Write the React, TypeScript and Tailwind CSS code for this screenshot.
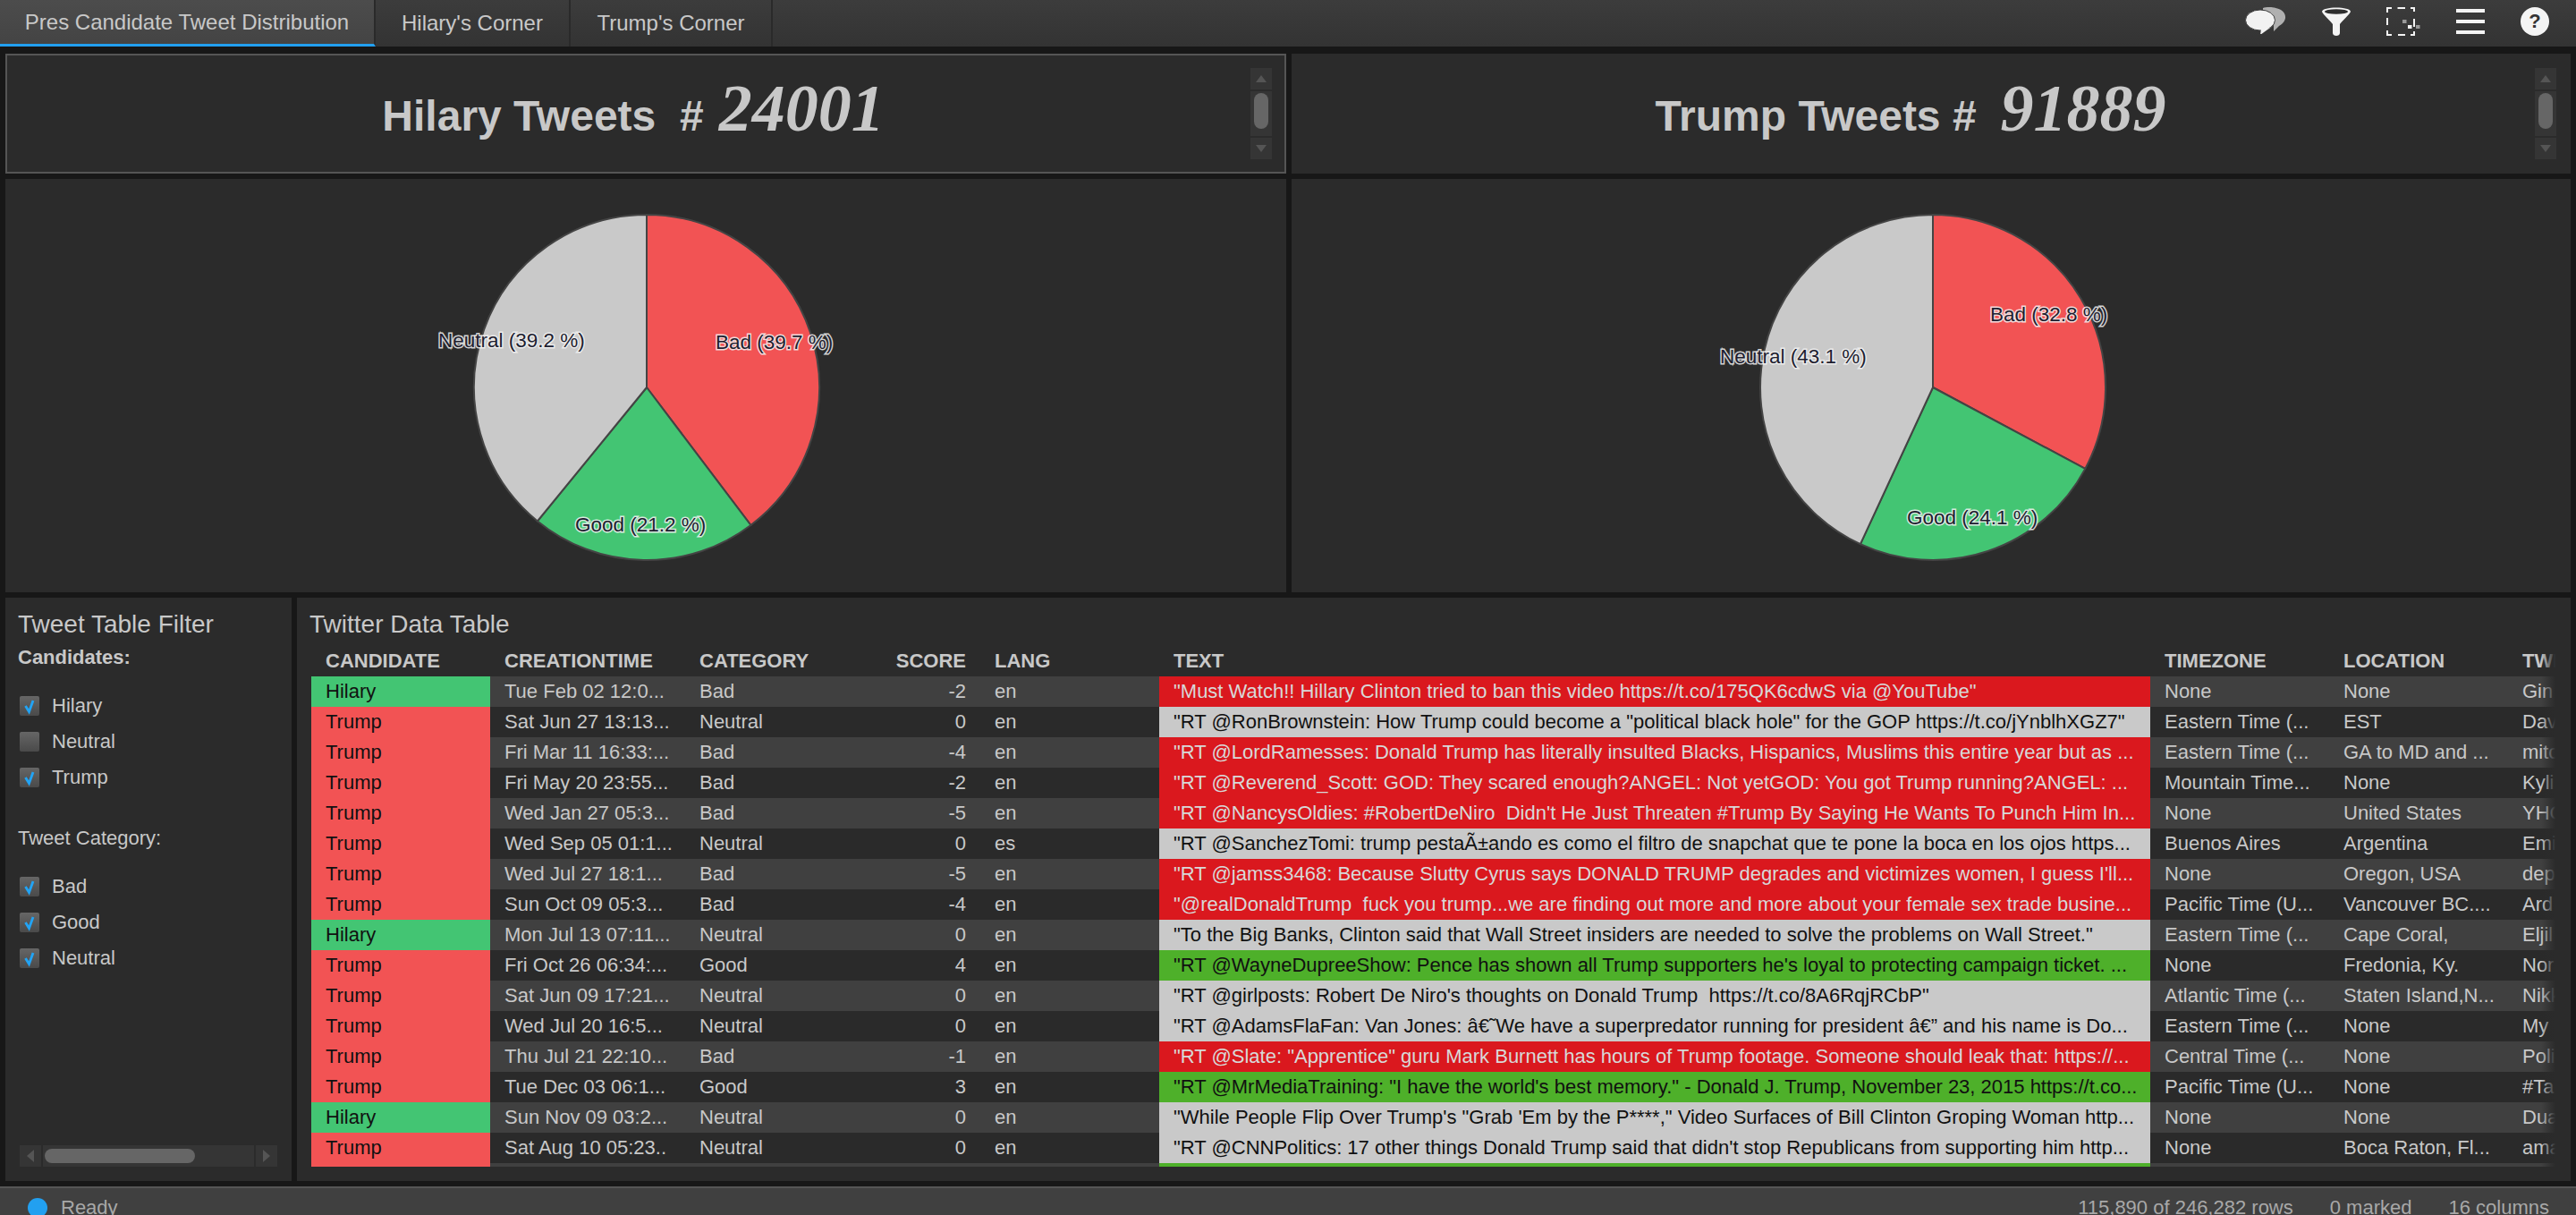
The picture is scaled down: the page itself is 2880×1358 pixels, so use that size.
import React from "react";

const SANS = "font-['Liberation_Sans',Arial,sans-serif]";

type Row = { c: string; t: string; cat: string; s: number; l: string; text: string; tz: string; loc: string; tw: string };
const rows: Row[] = [
  { c: "Hilary", t: "Tue Feb 02 12:0...", cat: "Bad", s: -2, l: "en", text: "\"Must Watch!! Hillary Clinton tried to ban this video https://t.co/175QK6cdwS via @YouTube\"", tz: "None", loc: "None", tw: "Gin" },
  { c: "Trump", t: "Sat Jun 27 13:13...", cat: "Neutral", s: 0, l: "en", text: "\"RT @RonBrownstein: How Trump could become a \"political black hole\" for the GOP https://t.co/jYnblhXGZ7\"", tz: "Eastern Time (...", loc: "EST", tw: "Dav" },
  { c: "Trump", t: "Fri Mar 11 16:33:...", cat: "Bad", s: -4, l: "en", text: "\"RT @LordRamesses: Donald Trump has literally insulted Blacks, Hispanics, Muslims this entire year but as ...", tz: "Eastern Time (...", loc: "GA to MD and ...", tw: "mitc" },
  { c: "Trump", t: "Fri May 20 23:55...", cat: "Bad", s: -2, l: "en", text: "\"RT @Reverend_Scott: GOD: They scared enough?ANGEL: Not yetGOD: You got Trump running?ANGEL: ...", tz: "Mountain Time...", loc: "None", tw: "Kyli" },
  { c: "Trump", t: "Wed Jan 27 05:3...", cat: "Bad", s: -5, l: "en", text: "\"RT @NancysOldies: #RobertDeNiro  Didn't He Just Threaten #Trump By Saying He Wants To Punch Him In...", tz: "None", loc: "United States", tw: "YHC" },
  { c: "Trump", t: "Wed Sep 05 01:1...", cat: "Neutral", s: 0, l: "es", text: "\"RT @SanchezTomi: trump pestaÃ±ando es como el filtro de snapchat que te pone la boca en los ojos https...", tz: "Buenos Aires", loc: "Argentina", tw: "Emi" },
  { c: "Trump", t: "Wed Jul 27 18:1...", cat: "Bad", s: -5, l: "en", text: "\"RT @jamss3468: Because Slutty Cyrus says DONALD TRUMP degrades and victimizes women, I guess I'll...", tz: "None", loc: "Oregon, USA", tw: "dep" },
  { c: "Trump", t: "Sun Oct 09 05:3...", cat: "Bad", s: -4, l: "en", text: "\"@realDonaldTrump  fuck you trump...we are finding out more and more about your female sex trade busine...", tz: "Pacific Time (U...", loc: "Vancouver BC....", tw: "Ard" },
  { c: "Hilary", t: "Mon Jul 13 07:11...", cat: "Neutral", s: 0, l: "en", text: "\"To the Big Banks, Clinton said that Wall Street insiders are needed to solve the problems on Wall Street.\"", tz: "Eastern Time (...", loc: "Cape Coral,", tw: "Eljil" },
  { c: "Trump", t: "Fri Oct 26 06:34:...", cat: "Good", s: 4, l: "en", text: "\"RT @WayneDupreeShow: Pence has shown all Trump supporters he's loyal to protecting campaign ticket. ...", tz: "None", loc: "Fredonia, Ky.", tw: "Nor" },
  { c: "Trump", t: "Sat Jun 09 17:21...", cat: "Neutral", s: 0, l: "en", text: "\"RT @girlposts: Robert De Niro's thoughts on Donald Trump  https://t.co/8A6RqjRCbP\"", tz: "Atlantic Time (...", loc: "Staten Island,N...", tw: "Nikk" },
  { c: "Trump", t: "Wed Jul 20 16:5...", cat: "Neutral", s: 0, l: "en", text: "\"RT @AdamsFlaFan: Van Jones: â€˜We have a superpredator running for president â€” and his name is Do...", tz: "Eastern Time (...", loc: "None", tw: "My" },
  { c: "Trump", t: "Thu Jul 21 22:10...", cat: "Bad", s: -1, l: "en", text: "\"RT @Slate: \"Apprentice\" guru Mark Burnett has hours of Trump footage. Someone should leak that: https://...", tz: "Central Time (...", loc: "None", tw: "Poli" },
  { c: "Trump", t: "Tue Dec 03 06:1...", cat: "Good", s: 3, l: "en", text: "\"RT @MrMediaTraining: \"I have the world's best memory.\" - Donald J. Trump, November 23, 2015 https://t.co...", tz: "Pacific Time (U...", loc: "None", tw: "#Ta" },
  { c: "Hilary", t: "Sun Nov 09 03:2...", cat: "Neutral", s: 0, l: "en", text: "\"While People Flip Over Trump's \"Grab 'Em by the P****,\" Video Surfaces of Bill Clinton Groping Woman http...", tz: "None", loc: "None", tw: "Dua" },
  { c: "Trump", t: "Sat Aug 10 05:23..", cat: "Neutral", s: 0, l: "en", text: "\"RT @CNNPolitics: 17 other things Donald Trump said that didn't stop Republicans from supporting him http...", tz: "None", loc: "Boca Raton, Fl...", tw: "ama" },
];

function wedge(cx: number, cy: number, r: number, from: number, to: number) {
  const p = (a: number) => {
    const rad = (a * Math.PI) / 180;
    return `${(cx + r * Math.sin(rad)).toFixed(2)} ${(cy - r * Math.cos(rad)).toFixed(2)}`;
  };
  const large = to - from > 180 ? 1 : 0;
  return `M${cx} ${cy} L${p(from)} A${r} ${r} 0 ${large} 1 ${p(to)} Z`;
}

function Pie({ w, bad, good, labels }: { w: number; bad: number; good: number; labels: { x: number; y: number; t: string }[] }) {
  const a = bad * 3.6;
  const b = (bad + good) * 3.6;
  const cx = 717;
  const cy = 233;
  const r = 193;
  return (
    <svg viewBox={`0 0 ${w} 462`} className="block w-full h-full">
      <path d={wedge(cx, cy, r, 0, a)} fill="#f25354" stroke="#444" strokeWidth="2" />
      <path d={wedge(cx, cy, r, a, b)} fill="#43c573" stroke="#444" strokeWidth="2" />
      <path d={wedge(cx, cy, r, b, 360)} fill="#c9c9c9" stroke="#444" strokeWidth="2" />
      {labels.map((l) => (
        <text
          key={l.t}
          x={l.x}
          y={l.y}
          fontSize="22.5"
          fontFamily="'Liberation Sans',Arial,sans-serif"
          fill="#1e1e30"
          stroke="#f2f2f2"
          strokeWidth="3"
          strokeOpacity="0.85"
          paintOrder="stroke"
        >
          {l.t}
        </text>
      ))}
    </svg>
  );
}

function VScroll({ pos }: { pos: string }) {
  return (
    <div className={`absolute ${pos} w-[24px] h-[102px] flex flex-col gap-[2px]`}>
      <div className="h-[24px] bg-[#353535] flex items-center justify-center">
        <div className="w-0 h-0 border-x-[6px] border-x-transparent border-b-[8px] border-b-[#555]" />
      </div>
      <div className="flex-1 bg-[#353535] flex justify-center pt-[2px]">
        <div className="w-[16px] h-[40px] rounded-full bg-[#666]" />
      </div>
      <div className="h-[24px] bg-[#353535] flex items-center justify-center">
        <div className="w-0 h-0 border-x-[6px] border-x-transparent border-t-[8px] border-t-[#555]" />
      </div>
    </div>
  );
}

function Check({ on, label }: { on: boolean; label: string }) {
  return (
    <div className="flex items-center h-[40px] pl-[2px]">
      <div className="w-[22px] h-[22px] rounded-[2px] bg-gradient-to-b from-[#666] to-[#4a4a4a] flex items-center justify-center">
        {on && (
          <svg viewBox="0 0 22 22" className="w-[22px] h-[22px]">
            <path d="M6.5 11 L10.5 17.5 L15 5" fill="none" stroke="#22a4f5" strokeWidth="2.8" />
          </svg>
        )}
      </div>
      <span className="ml-[14px] pb-[2px] text-[22px] text-[#c8c8c8]">{label}</span>
    </div>
  );
}

function ChatIcon() {
  return (
    <svg viewBox="0 0 46 30" className="block w-[46px] h-[30px]">
      <path d="M20 1 C24 -0.5 34 -0.5 40 3 C48 8 46 17 38 21 L32 27 L32 20 L20 14 Z" fill="#b0b0b0" />
      <ellipse cx="17" cy="14.5" rx="16.5" ry="11.5" fill="#f2f2f2" stroke="#3a3a3a" strokeWidth="1" />
      <path d="M18 24 L28 23 L17 31 Z" fill="#f2f2f2" />
    </svg>
  );
}
function FunnelIcon() {
  return (
    <svg viewBox="0 0 32 32" className="block w-[32px] h-[32px]">
      <path d="M0 5 C0 -1 32 -1 32 5 C32 7 21 17 20 19 L20 29 C20 33 12 33 12 29 L12 19 C11 17 0 7 0 5 Z" fill="#f4f4f4" />
      <ellipse cx="16" cy="5" rx="13" ry="2.8" fill="#2e2e2e" />
    </svg>
  );
}
function SelectIcon() {
  return (
    <svg viewBox="0 0 38 32" className="block w-[38px] h-[32px]">
      <g fill="none" stroke="#f4f4f4" strokeWidth="2">
        <path d="M1 6 V1 H6 M12.5 1 H21 M27 1 H31 V5 M31 13 V22 M31 27 V31 H27 M21 31 H13 M6 31 H1 V26 M1 20 V12" />
      </g>
      <rect x="18" y="14" width="4.5" height="4" fill="#999" />
      <rect x="24" y="20" width="4.5" height="4" fill="#f4f4f4" />
      <rect x="33" y="20" width="4.5" height="4" fill="#999" />
    </svg>
  );
}
function MenuIcon() {
  return (
    <div className="w-[32px] h-[28px] mt-[2px] flex flex-col justify-between">
      <div className="h-[4px] bg-[#f4f4f4]" />
      <div className="h-[4px] bg-[#f4f4f4]" />
      <div className="h-[4px] bg-[#f4f4f4]" />
    </div>
  );
}
function HelpIcon() {
  return (
    <div className="w-[32px] h-[32px] rounded-full bg-[#f4f4f4] flex items-center justify-center text-[22px] leading-none font-bold text-[#333]">?</div>
  );
}

const cols = "grid grid-cols-[200px_218px_210px_120px_200px_1108px_200px_200px_53px] h-[34px]";
const hcell = "text-[22px] font-bold text-[#c8c8c8] leading-[34px] whitespace-pre overflow-hidden px-[16px]";
const cell = "text-[22px] leading-[34px] whitespace-pre overflow-hidden px-[16px]";

export default function App() {
  return (
    <div className={`${SANS} w-[2880px] h-[1358px] overflow-hidden bg-[#171717] flex flex-col text-[#c8c8c8]`}>
      <header className="h-[52px] shrink-0 flex items-stretch bg-gradient-to-b from-[#3c3c3c] to-[#333]">
        <div className="w-[420px] flex items-center justify-center text-[24px] bg-gradient-to-b from-[#4c4c4c] to-[#444] border-b-[3px] border-[#22a0f0] border-r-2 border-r-[#2a2a2a]">
          Pres Candidate Tweet Distribution
        </div>
        <div className="w-[218px] flex items-center justify-center text-[24px] border-r-2 border-[#2a2a2a]">Hilary's Corner</div>
        <div className="w-[226px] flex items-center justify-center text-[24px] border-r-2 border-[#2a2a2a]">Trump's Corner</div>
        <div className="flex-1 flex items-start justify-end pt-[8px] pr-[30px] gap-[40px]">
          <ChatIcon />
          <FunnelIcon />
          <SelectIcon />
          <MenuIcon />
          <HelpIcon />
        </div>
      </header>

      <main className="flex-1 min-h-0 pt-[8px] px-[6px] pb-[6px] flex flex-col gap-[6px]">
        <div className="grid grid-cols-[1432px_1430px] grid-rows-[134px] gap-[6px] shrink-0">
          <div className="relative bg-[#2b2b2b] border-2 border-[#555] flex justify-center pt-[23px] pr-[28px] overflow-hidden">
            <div className="flex items-baseline h-[72px]">
              <span className="text-[48px] leading-none font-bold whitespace-pre">Hilary Tweets  #</span>
              <span className="ml-[17px] text-[74px] leading-[72px] font-bold italic font-['Liberation_Serif',serif]">24001</span>
            </div>
            <VScroll pos="top-[14px] right-[14px]" />
          </div>
          <div className="relative bg-[#2b2b2b] flex justify-center pt-[25px] pr-[46px] overflow-hidden">
            <div className="flex items-baseline h-[72px]">
              <span className="text-[48px] leading-none font-bold whitespace-pre">Trump Tweets #</span>
              <span className="ml-[27px] text-[74px] leading-[72px] font-bold italic font-['Liberation_Serif',serif]">91889</span>
            </div>
            <VScroll pos="top-[16px] right-[16px]" />
          </div>
        </div>

        <div className="grid grid-cols-[1432px_1430px] grid-rows-[462px] gap-[6px] shrink-0">
          <div className="bg-[#2b2b2b]">
            <Pie
              w={1432}
              bad={39.7}
              good={21.2}
              labels={[
                { x: 484, y: 188, t: "Neutral (39.2 %)" },
                { x: 794, y: 190, t: "Bad (39.7 %)" },
                { x: 637, y: 394, t: "Good (21.2 %)" },
              ]}
            />
          </div>
          <div className="bg-[#2b2b2b]">
            <Pie
              w={1430}
              bad={32.8}
              good={24.1}
              labels={[
                { x: 479, y: 206, t: "Neutral (43.1 %)" },
                { x: 781, y: 159, t: "Bad (32.8 %)" },
                { x: 688, y: 386, t: "Good (24.1 %)" },
              ]}
            />
          </div>
        </div>

        <div className="flex gap-[6px] flex-1 min-h-0">
          <aside className="relative w-[320px] shrink-0 bg-[#2b2b2b] pl-[14px] pt-[14px]">
            <div className="text-[28px] leading-[32px]">Tweet Table Filter</div>
            <div className="text-[22px] font-bold leading-[28px] mt-[7px]">Candidates:</div>
            <div className="mt-[20px]">
              <Check on label="Hilary" />
              <Check on={false} label="Neutral" />
              <Check on label="Trump" />
            </div>
            <div className="text-[22px] leading-[28px] mt-[34px]">Tweet Category:</div>
            <div className="mt-[20px]">
              <Check on label="Bad" />
              <Check on label="Good" />
              <Check on label="Neutral" />
            </div>
            <div className="absolute left-[16px] bottom-[16px] w-[288px] h-[24px] flex gap-[2px]">
              <div className="w-[24px] bg-[#353535] flex items-center justify-center">
                <div className="w-0 h-0 border-y-[7px] border-y-transparent border-r-[8px] border-r-[#555]" />
              </div>
              <div className="flex-1 bg-[#353535] pl-[2px] pt-[4px]">
                <div className="w-[168px] h-[16px] rounded-full bg-[#666]" />
              </div>
              <div className="w-[24px] bg-[#353535] flex items-center justify-center">
                <div className="w-0 h-0 border-y-[7px] border-y-transparent border-l-[8px] border-l-[#555]" />
              </div>
            </div>
          </aside>

          <section className="flex-1 min-w-0 bg-[#2b2b2b] pl-[16px] pt-[14px] relative overflow-hidden">
            <div className="text-[28px] leading-[32px] -ml-[2px]">Twitter Data Table</div>
            <div className="mt-[8px] w-[2509px] overflow-hidden">
              <div className={cols}>
                <div className={hcell}>CANDIDATE</div>
                <div className={hcell}>CREATIONTIME</div>
                <div className={hcell}>CATEGORY</div>
                <div className={`${hcell} text-right`}>SCORE</div>
                <div className={hcell}>LANG</div>
                <div className={hcell}>TEXT</div>
                <div className={hcell}>TIMEZONE</div>
                <div className={hcell}>LOCATION</div>
                <div className={hcell}>TWITTER</div>
              </div>
              {rows.map((r, i) => {
                const alt = i % 2 === 0;
                const textBg = r.cat === "Bad" ? "bg-[#da181e] text-[#d8d8d8]" : r.cat === "Good" ? "bg-[#4eb02a] text-[#111]" : "bg-[#c9c9c9] text-[#111]";
                return (
                  <div key={i} className={`${cols} ${alt ? "bg-[#404040]" : "bg-[#2a2a2a]"}`}>
                    <div className={`${cell} text-[#111] ${r.c === "Hilary" ? "bg-[#43c573]" : "bg-[#f25354]"}`}>{r.c}</div>
                    <div className={cell}>{r.t}</div>
                    <div className={cell}>{r.cat}</div>
                    <div className={`${cell} text-right`}>{r.s}</div>
                    <div className={cell}>{r.l}</div>
                    <div className={`${cell} ${textBg}`}>{r.text}</div>
                    <div className={cell}>{r.tz}</div>
                    <div className={cell}>{r.loc}</div>
                    <div className={`${cell} pr-0`}>{r.tw}</div>
                  </div>
                );
              })}
              <div className="grid grid-cols-[200px_218px_210px_120px_200px_1108px_453px] h-[4px] bg-[#404040]">
                <div className="bg-[#f25354]" />
                <div className="col-span-4" />
                <div className="bg-[#4eb02a]" />
              </div>
            </div>
            <div className="absolute top-[54px] right-[17px] w-[16px] h-[582px] bg-gradient-to-r from-transparent to-[#2b2b2b]" />
          </section>
        </div>
      </main>

      <footer className="h-[32px] shrink-0 border-t-2 border-[#555] bg-[#404040] flex items-start text-[22px] text-[#a8a8a8] overflow-hidden">
        <div className="ml-[31px] mt-[11px] w-[22px] h-[22px] rounded-full bg-[#22a0f0] shrink-0" />
        <div className="ml-[15px] mt-[5px] leading-[34px]">Ready</div>
        <div className="ml-auto mr-[30px] mt-[5px] leading-[34px] flex gap-[41px]">
          <span>115,890 of 246,282 rows</span>
          <span>0 marked</span>
          <span>16 columns</span>
        </div>
      </footer>
    </div>
  );
}
